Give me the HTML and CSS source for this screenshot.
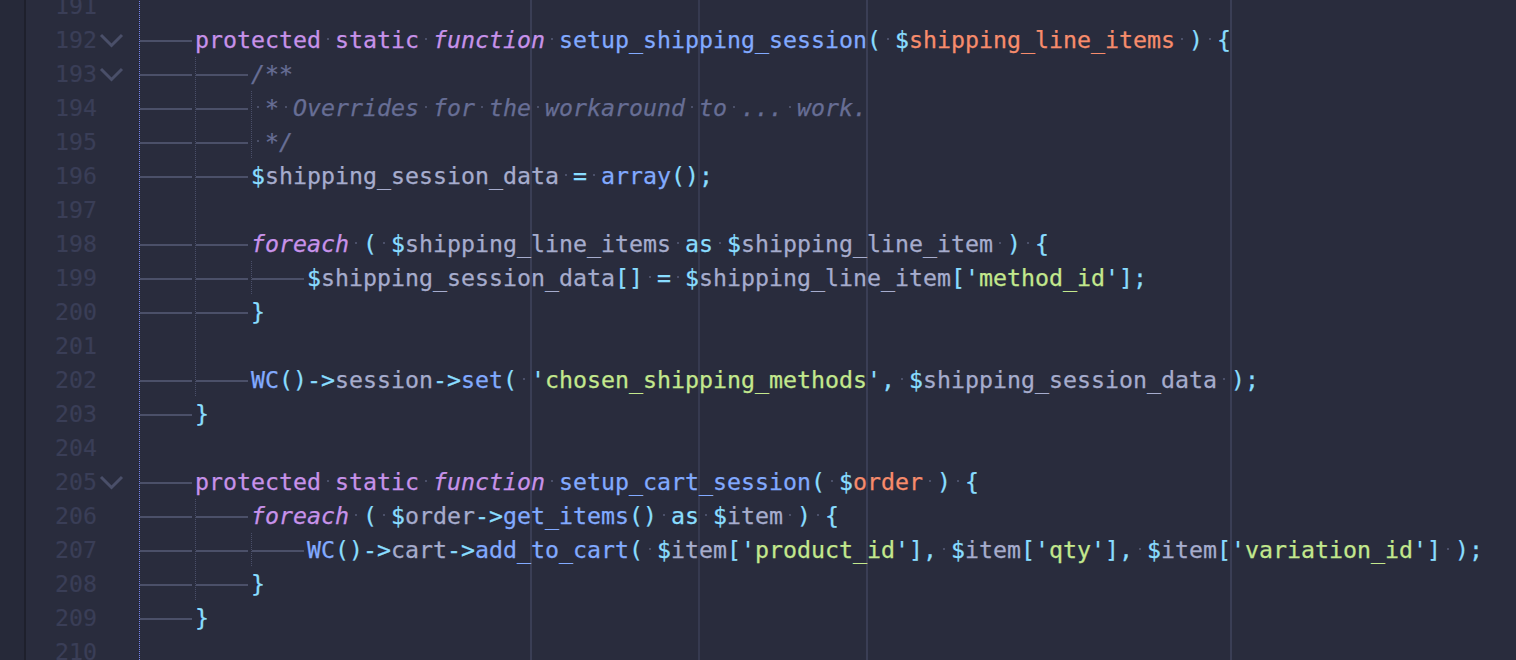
FILE: index.html
```html
<!DOCTYPE html>
<html>
<head>
<meta charset="utf-8">
<link rel="stylesheet" href="styles.css">
</head>
<body>
<div class="editor">
  <div class="strip"></div>
  <div class="lines">
    <div class="ln"><span class="num">191</span><span class="fold"></span><span class="code"></span></div>
    <div class="ln"><span class="num">192</span><span class="fold"><svg viewBox="0 0 42 34" width="42" height="34"><path d="M4 12 L14.5 22.5 L25 12" /></svg></span><span class="code"><span class="t">	</span><span class="k">protected</span><span class="s"> </span><span class="k">static</span><span class="s"> </span><span class="ki">function</span><span class="s"> </span><span class="f">setup_shipping_session</span><span class="p">(</span><span class="s"> </span><span class="p">$</span><span class="a">shipping_line_items</span><span class="s"> </span><span class="p">)</span><span class="s"> </span><span class="p">{</span></span></div>
    <div class="ln g1"><span class="num">193</span><span class="fold"><svg viewBox="0 0 42 34" width="42" height="34"><path d="M4 12 L14.5 22.5 L25 12" /></svg></span><span class="code"><span class="t">	</span><span class="t">	</span><span class="c">/**</span></span></div>
    <div class="ln g1 g2"><span class="num">194</span><span class="fold"></span><span class="code"><span class="t">	</span><span class="t">	</span><span class="s"> </span><span class="c">*</span><span class="s"> </span><span class="c">Overrides</span><span class="s"> </span><span class="c">for</span><span class="s"> </span><span class="c">the</span><span class="s"> </span><span class="c">workaround</span><span class="s"> </span><span class="c">to</span><span class="s"> </span><span class="c">...</span><span class="s"> </span><span class="c">work.</span></span></div>
    <div class="ln g1 g2"><span class="num">195</span><span class="fold"></span><span class="code"><span class="t">	</span><span class="t">	</span><span class="s"> </span><span class="c">*/</span></span></div>
    <div class="ln g1"><span class="num">196</span><span class="fold"></span><span class="code"><span class="t">	</span><span class="t">	</span><span class="p">$</span><span class="v">shipping_session_data</span><span class="s"> </span><span class="p">=</span><span class="s"> </span><span class="f">array</span><span class="p">();</span></span></div>
    <div class="ln g1"><span class="num">197</span><span class="fold"></span><span class="code"></span></div>
    <div class="ln g1"><span class="num">198</span><span class="fold"></span><span class="code"><span class="t">	</span><span class="t">	</span><span class="ki">foreach</span><span class="s"> </span><span class="p">(</span><span class="s"> </span><span class="p">$</span><span class="v">shipping_line_items</span><span class="s"> </span><span class="p">as</span><span class="s"> </span><span class="p">$</span><span class="v">shipping_line_item</span><span class="s"> </span><span class="p">)</span><span class="s"> </span><span class="p">{</span></span></div>
    <div class="ln g1 g2"><span class="num">199</span><span class="fold"></span><span class="code"><span class="t">	</span><span class="t">	</span><span class="t">	</span><span class="p">$</span><span class="v">shipping_session_data</span><span class="p">[]</span><span class="s"> </span><span class="p">=</span><span class="s"> </span><span class="p">$</span><span class="v">shipping_line_item</span><span class="p">['</span><span class="st">method_id</span><span class="p">'];</span></span></div>
    <div class="ln g1"><span class="num">200</span><span class="fold"></span><span class="code"><span class="t">	</span><span class="t">	</span><span class="p">}</span></span></div>
    <div class="ln g1"><span class="num">201</span><span class="fold"></span><span class="code"></span></div>
    <div class="ln g1"><span class="num">202</span><span class="fold"></span><span class="code"><span class="t">	</span><span class="t">	</span><span class="f">WC</span><span class="p">()-&gt;</span><span class="v">session</span><span class="p">-&gt;</span><span class="f">set</span><span class="p">(</span><span class="s"> </span><span class="p">'</span><span class="st">chosen_shipping_methods</span><span class="p">',</span><span class="s"> </span><span class="p">$</span><span class="v">shipping_session_data</span><span class="s"> </span><span class="p">);</span></span></div>
    <div class="ln"><span class="num">203</span><span class="fold"></span><span class="code"><span class="t">	</span><span class="p">}</span></span></div>
    <div class="ln"><span class="num">204</span><span class="fold"></span><span class="code"></span></div>
    <div class="ln"><span class="num">205</span><span class="fold"><svg viewBox="0 0 42 34" width="42" height="34"><path d="M4 12 L14.5 22.5 L25 12" /></svg></span><span class="code"><span class="t">	</span><span class="k">protected</span><span class="s"> </span><span class="k">static</span><span class="s"> </span><span class="ki">function</span><span class="s"> </span><span class="f">setup_cart_session</span><span class="p">(</span><span class="s"> </span><span class="p">$</span><span class="a">order</span><span class="s"> </span><span class="p">)</span><span class="s"> </span><span class="p">{</span></span></div>
    <div class="ln g1"><span class="num">206</span><span class="fold"></span><span class="code"><span class="t">	</span><span class="t">	</span><span class="ki">foreach</span><span class="s"> </span><span class="p">(</span><span class="s"> </span><span class="p">$</span><span class="v">order</span><span class="p">-&gt;</span><span class="f">get_items</span><span class="p">()</span><span class="s"> </span><span class="p">as</span><span class="s"> </span><span class="p">$</span><span class="v">item</span><span class="s"> </span><span class="p">)</span><span class="s"> </span><span class="p">{</span></span></div>
    <div class="ln g1 g2"><span class="num">207</span><span class="fold"></span><span class="code"><span class="t">	</span><span class="t">	</span><span class="t">	</span><span class="f">WC</span><span class="p">()-&gt;</span><span class="v">cart</span><span class="p">-&gt;</span><span class="f">add_to_cart</span><span class="p">(</span><span class="s"> </span><span class="p">$</span><span class="v">item</span><span class="p">['</span><span class="st">product_id</span><span class="p">'],</span><span class="s"> </span><span class="p">$</span><span class="v">item</span><span class="p">['</span><span class="st">qty</span><span class="p">'],</span><span class="s"> </span><span class="p">$</span><span class="v">item</span><span class="p">['</span><span class="st">variation_id</span><span class="p">']</span><span class="s"> </span><span class="p">);</span></span></div>
    <div class="ln g1"><span class="num">208</span><span class="fold"></span><span class="code"><span class="t">	</span><span class="t">	</span><span class="p">}</span></span></div>
    <div class="ln"><span class="num">209</span><span class="fold"></span><span class="code"><span class="t">	</span><span class="p">}</span></span></div>
    <div class="ln"><span class="num">210</span><span class="fold"></span><span class="code"></span></div>
  </div>
</div>
</body>
</html>
```

FILE: styles.css
```css
html, body {
  margin: 0;
  padding: 0;
  background: #292c3d;
  overflow: hidden;
}

.editor {
  display: flex;
  width: 1516px;
  height: 660px;
  overflow: hidden;
  background: #292c3d;
  font-family: "DejaVu Sans Mono", "Liberation Mono", monospace;
  font-size: 23.26px;
  line-height: 34px;
}

.strip {
  width: 24px;
  flex: none;
  background: #262939;
  border-right: 2px solid #1e202c;
}

.lines {
  flex: 1;
  margin-top: -11px;
}

.ln {
  display: flex;
  height: 34px;
}

.num {
  width: 71px;
  flex: none;
  text-align: right;
  color: #3a3e57;
  -webkit-text-stroke: 0.2px currentColor;
}

.fold {
  width: 42px;
  flex: none;
  height: 34px;
}

.fold svg {
  display: block;
}

.fold path {
  fill: none;
  stroke: #4a4f69;
  stroke-width: 3;
}

.code {
  flex: 1;
  position: relative;
  height: 34px;
  white-space: pre;
  -webkit-text-stroke: 0.25px currentColor;
  background-image:
    linear-gradient(#7482ec 50%, transparent 50%),
    linear-gradient(#3a3e55, #3a3e55),
    linear-gradient(#363a50, #363a50),
    linear-gradient(#3a3e55, #3a3e55),
    linear-gradient(#3a3e55, #3a3e55);
  background-size: 1px 2px, 2px 100%, 2px 100%, 2px 100%, 2px 100%;
  background-position: 0 0, 391px 0, 559px 0, 727px 0, 1091px 0;
  background-repeat: repeat-y, no-repeat, no-repeat, no-repeat, no-repeat;
}

.g1 .code::before,
.g2 .code::after {
  content: "";
  position: absolute;
  top: 0;
  bottom: 0;
  width: 1px;
  background: linear-gradient(#4a4f69 50%, transparent 50%) 0 0 / 1px 2px repeat-y;
}

.g1 .code::before { left: 56px; }
.g2 .code::after { left: 112px; }

.t {
  display: inline-block;
  width: 56px;
  height: 34px;
  vertical-align: top;
  overflow: hidden;
  background: linear-gradient(#4b5069, #4b5069) 1px 17px / 52px 2px no-repeat;
}

.s {
  display: inline-block;
  width: 14px;
  height: 34px;
  vertical-align: top;
  background: linear-gradient(#4b5069, #4b5069) 6px 15px / 2px 2px no-repeat;
}

.k { color: #c792ea; }
.ki { color: #c792ea; font-style: italic; }
.f { color: #82aaff; }
.p { color: #89ddff; }
.a { color: #f78c6c; }
.v { color: #a6accd; }
.st { color: #c3e88d; }
.c { color: #676e95; font-style: italic; }
```
